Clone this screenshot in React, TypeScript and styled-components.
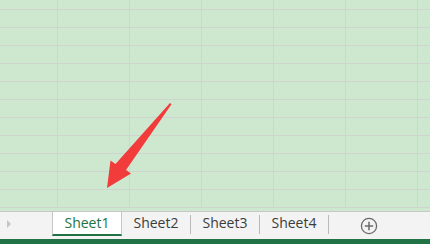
import React, { FC } from "react";
import styled, { createGlobalStyle } from "styled-components";

const GlobalStyle = createGlobalStyle`
  html, body {
    margin: 0;
    padding: 0;
    background: #cde8cf;
    overflow: hidden;
  }
  body {
    font-family: "Open Sans", "Noto Sans", "Liberation Sans", sans-serif;
  }
`;

const COLS = [58, 72, 72, 72, 72, 72, 72];
const ROWS = [10, 18, 18, 18, 18, 18, 18, 18, 18, 18, 18, 18];
const tabs = ["Sheet1", "Sheet2", "Sheet3", "Sheet4"];

const App: FC = () => {
  const active = 0;

  return (
    <Window>
      <GlobalStyle />
      <SheetArea>
        <Cells>
          {ROWS.map((_, r) =>
            COLS.map((_, c) => <Cell key={`${r}-${c}`} />)
          )}
        </Cells>
        <Arrow viewBox="0 0 80 100" width="80" height="100">
          <path
            d="M66 3 L67.5 4.2 L22 70 L27 73.5 L3 88 L6.5 60.5 L11.5 64 Z"
            fill="#f23b3b"
          />
        </Arrow>
      </SheetArea>
      <TabBar>
        <Scroller>
          <Triangle />
        </Scroller>
        {tabs.map((t, i) => (
          <Tab key={t} active={i === active}>
            {t}
          </Tab>
        ))}
        <AddButton>
          <svg width="18" height="18" viewBox="0 0 18 18">
            <circle cx="9" cy="9" r="7.6" fill="none" stroke="#6b6b6b" strokeWidth="1.3" />
            <path d="M9 4.8 V13.2 M4.8 9 H13.2" stroke="#6b6b6b" strokeWidth="1.5" />
          </svg>
        </AddButton>
      </TabBar>
      <StatusStrip />
    </Window>
  );
};

const Window = styled.div`
  width: 430px;
  height: 244px;
  display: flex;
  flex-direction: column;
  overflow: hidden;
`;

const SheetArea = styled.div`
  position: relative;
  height: 211px;
  overflow: hidden;
  background: #cde8cf;
`;

const Cells = styled.div`
  display: grid;
  grid-template-columns: ${COLS.map((w) => `${w}px`).join(" ")};
  grid-template-rows: ${ROWS.map((h) => `${h}px`).join(" ")};
`;

const Cell = styled.div`
  box-sizing: border-box;
  border-right: 1px solid #d0d4cf;
  border-bottom: 1px solid #d0d4cf;
`;

const Arrow = styled.svg`
  position: absolute;
  left: 104px;
  top: 100px;
`;

const TabBar = styled.div`
  box-sizing: border-box;
  height: 28px;
  border-top: 1px solid #c8c8c8;
  background: #f3f3f3;
  display: flex;
  align-items: flex-start;
`;

const Scroller = styled.div`
  width: 52px;
  height: 24px;
  display: flex;
  align-items: center;
  padding-left: 7px;
  box-sizing: border-box;
`;

const Triangle = styled.div`
  width: 0;
  height: 0;
  border-top: 4px solid transparent;
  border-bottom: 4px solid transparent;
  border-left: 4px solid #c4c4c4;
`;

const Tab = styled.div<{ active: boolean }>`
  box-sizing: border-box;
  height: 24px;
  width: ${(p) => (p.active ? "70px" : "69px")};
  display: flex;
  align-items: center;
  justify-content: center;
  font-size: 14px;
  color: ${(p) => (p.active ? "#217346" : "#3c3c3c")};
  background: ${(p) => (p.active ? "#ffffff" : "transparent")};
  border-left: ${(p) => (p.active ? "1px solid #c6c6c6" : "none")};
  border-right: 1px solid ${(p) => (p.active ? "#c6c6c6" : "transparent")};
  border-bottom: 2px solid ${(p) => (p.active ? "#217346" : "transparent")};
  position: relative;
  padding-bottom: 1px;

  &::after {
    content: "";
    display: ${(p) => (p.active ? "none" : "block")};
    position: absolute;
    right: -1px;
    top: 3px;
    height: 19px;
    width: 1px;
    background: #b9b9b9;
  }
`;

const AddButton = styled.div`
  margin-left: 31px;
  height: 24px;
  display: flex;
  align-items: center;
  padding-top: 4px;
  box-sizing: border-box;
`;

const StatusStrip = styled.div`
  height: 5px;
  background: #217346;
`;

export default App;
